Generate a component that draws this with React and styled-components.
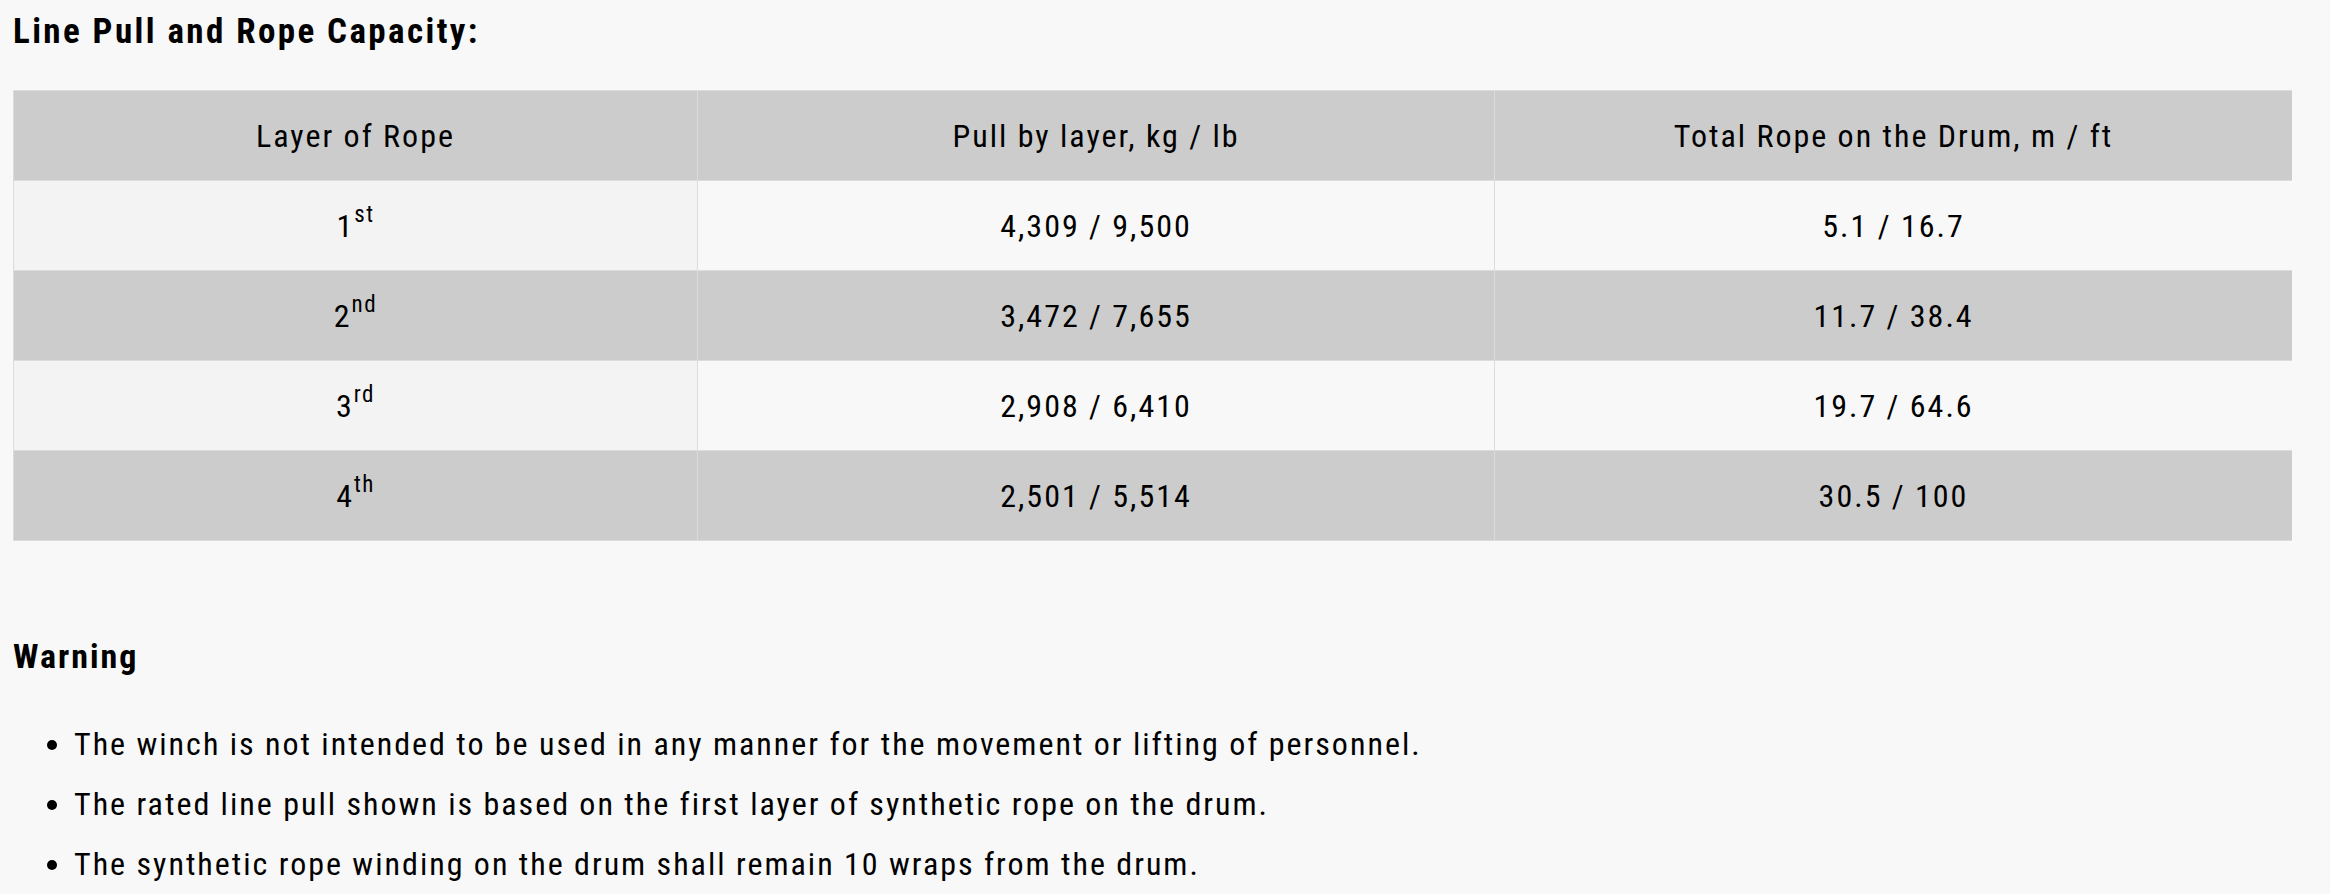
import React from 'react'
import styled, { createGlobalStyle } from 'styled-components'

const GlobalStyle = createGlobalStyle`
  html, body {
    margin: 0;
    padding: 0;
    background: #f8f8f8;
  }

  body {
    font-family: 'Roboto Condensed', Roboto, 'Liberation Sans', sans-serif;
    color: #000;
  }
`

const rows = [
  { layer: '1', suffix: 'st', pull: '4,309 / 9,500', total: '5.1 / 16.7' },
  { layer: '2', suffix: 'nd', pull: '3,472 / 7,655', total: '11.7 / 38.4' },
  { layer: '3', suffix: 'rd', pull: '2,908 / 6,410', total: '19.7 / 64.6' },
  { layer: '4', suffix: 'th', pull: '2,501 / 5,514', total: '30.5 / 100' },
]

const warnings = [
  'The winch is not intended to be used in any manner for the movement or lifting of personnel.',
  'The rated line pull shown is based on the first layer of synthetic rope on the drum.',
  'The synthetic rope winding on the drum shall remain 10 wraps from the drum.',
]

const App = () => {
  return (
    <StyledPage>
      <GlobalStyle />

      <StyledTitle>Line Pull and Rope Capacity:</StyledTitle>

      <StyledTable>
        <colgroup>
          <col width="684" />
          <col width="797" />
          <col width="798" />
        </colgroup>
        <thead>
          <tr>
            <StyledHead>Layer of Rope</StyledHead>
            <StyledHead>Pull by layer, kg / lb</StyledHead>
            <StyledHead>Total Rope on the Drum, m / ft</StyledHead>
          </tr>
        </thead>
        <tbody>
          { rows.map((row, index) => (
            <StyledRow key={index} $shaded={index % 2 === 1}>
              <StyledCell $first={index % 2 === 0}>
                { row.layer }<sup>{ row.suffix }</sup>
              </StyledCell>
              <StyledCell>{ row.pull }</StyledCell>
              <StyledCell>{ row.total }</StyledCell>
            </StyledRow>
          )) }
        </tbody>
      </StyledTable>

      <StyledWarningTitle>Warning</StyledWarningTitle>

      <StyledList>
        { warnings.map((text, index) => (
          <li key={index}>{ text }</li>
        )) }
      </StyledList>
    </StyledPage>
  )
}

export default App

const StyledPage = styled.div`
  width: 2279px;
  padding: 12px 0 0 13px;
  overflow: hidden;
`

const StyledTitle = styled.h3`
  margin: 0 0 38px;
  font-size: 35px;
  line-height: 40px;
  font-weight: 700;
  letter-spacing: 2.4px;
`

const StyledTable = styled.table`
  width: 2279px;
  border-collapse: collapse;
  table-layout: fixed;
  border: 1px solid #dcdcdc;
`

const StyledHead = styled.th`
  height: 89px;
  padding: 0;
  background: #cccccc;
  border: 1px solid #dcdcdc;
  font-size: 32px;
  font-weight: 400;
  letter-spacing: 2px;
  text-align: center;
  vertical-align: middle;
`

const StyledRow = styled.tr`
  background: ${({ $shaded }) => ($shaded ? '#cccccc' : '#f8f8f8')};
`

const StyledCell = styled.td`
  height: 89px;
  padding: 0;
  border: 1px solid #dcdcdc;
  font-size: 32px;
  letter-spacing: 2px;
  text-align: center;
  vertical-align: middle;
  background: ${({ $first }) => ($first ? '#f3f3f3' : 'transparent')};

  sup {
    font-size: 23px;
    line-height: 0;
    vertical-align: 15px;
    letter-spacing: 1.5px;
  }
`

const StyledWarningTitle = styled.h4`
  margin: 95px 0 0;
  font-size: 34px;
  line-height: 40px;
  font-weight: 700;
  letter-spacing: 2px;
`

const StyledList = styled.ul`
  margin: 38px 0 0;
  padding-left: 61px;

  li {
    font-size: 32px;
    line-height: 60px;
    letter-spacing: 2px;
  }
`
